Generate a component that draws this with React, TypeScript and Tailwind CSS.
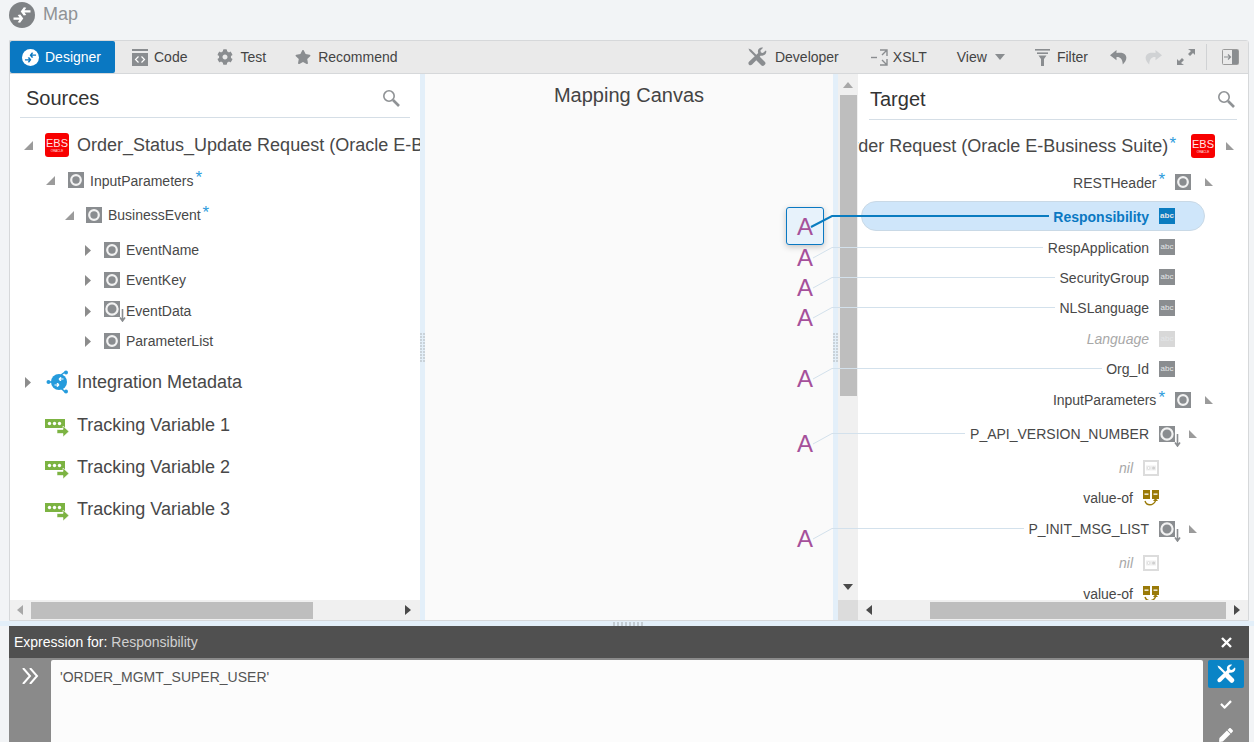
import React from "react"
import { FaCog, FaStar, FaCheck, FaPen } from "react-icons/fa"

function Expanded({ flip }: { flip?: boolean }) {
  return (
    <svg width={flip ? 8 : 9} height={flip ? 8 : 9} viewBox="0 0 9 9" className="shrink-0">
      <polygon points={flip ? "0,0 9,9 0,9" : "9,0 9,9 0,9"} fill="#9b9b9b" />
    </svg>
  )
}

function Collapsed() {
  return (
    <svg width="6" height="11" viewBox="0 0 6 11" className="shrink-0">
      <polygon points="0,0 6,5.5 0,11" fill="#8c8c8c" />
    </svg>
  )
}

function RingIcon() {
  return (
    <svg width="16" height="16" viewBox="0 0 16 16" className="shrink-0">
      <rect width="16" height="16" fill="#8a8d90" />
      <circle cx="8" cy="8" r="4.8" fill="#8a8d90" stroke="#f2f2f2" strokeWidth="2.2" />
    </svg>
  )
}

function RingDownIcon() {
  return (
    <svg width="22" height="21" viewBox="0 0 22 21" className="shrink-0">
      <rect width="16" height="16" fill="#8a8d90" />
      <circle cx="8" cy="8" r="5.6" fill="#8a8d90" stroke="#f2f2f2" strokeWidth="2.2" />
      <path d="M18.5 8V19M16 16.5l2.5 3.5 2.5-3.5" fill="none" stroke="#8a8d90" strokeWidth="1.6" />
    </svg>
  )
}

function AbcIcon({ tone = "bg-[#8a8d90]" }: { tone?: string }) {
  return (
    <span className={`${tone} flex h-[16px] w-[16px] shrink-0 items-center justify-center text-[8px] leading-none text-[#e4e6e8]`}>
      abc
    </span>
  )
}

function EbsIcon() {
  return (
    <span className="flex h-[24px] w-[24px] shrink-0 flex-col items-center justify-center rounded-[3px] bg-[#f80000] text-[#ffe6e6]">
      <span className="text-[11px] leading-[12px]">EBS</span>
      <span className="text-[3px] leading-[4px]">ORACLE</span>
    </span>
  )
}

function NilIcon() {
  return (
    <svg width="16" height="16" viewBox="0 0 16 16" className="shrink-0">
      <rect x="1" y="1" width="14" height="14" fill="#fff" stroke="#dcdcdc" strokeWidth="2" />
      <rect x="3" y="5.5" width="10" height="5" fill="#efefef" />
      <circle cx="5.6" cy="8" r="1.4" fill="#fff" stroke="#d4d4d4" strokeWidth="0.7" />
      <circle cx="10.6" cy="8" r="1.5" fill="#d0d0d0" />
    </svg>
  )
}

function ValueOfIcon() {
  return (
    <svg width="16" height="16" viewBox="0 0 16 16" className="shrink-0">
      <rect x="0" y="0" width="7" height="9" fill="#9a7a08" />
      <rect x="9" y="0" width="7" height="9" fill="#9a7a08" />
      <rect x="1.5" y="3.5" width="4" height="1.3" fill="#fff" />
      <rect x="10.5" y="3.5" width="4" height="1.3" fill="#fff" />
      <path d="M2 11c1.5 5 8 5 10.5 0" fill="none" stroke="#9a7a08" strokeWidth="1.4" />
      <polygon points="10,11 15,11 12.5,8" fill="#9a7a08" />
    </svg>
  )
}

function TrackingIcon() {
  return (
    <svg width="24" height="18" viewBox="0 0 24 18" className="translate-y-[3px]">
      <rect x="0" y="0" width="20" height="9" fill="#7cb342" />
      <circle cx="4.5" cy="4.5" r="1.7" fill="#fff" />
      <circle cx="9.5" cy="4.5" r="1.7" fill="#fff" />
      <circle cx="14.5" cy="4.5" r="1.7" fill="#fff" />
      <path d="M12 10.5h6V7l6 5.5-6 5.5v-3.5h-6z" fill="#7cb342" stroke="#fff" strokeWidth="0.6" />
    </svg>
  )
}

function MetadataIcon() {
  return (
    <svg width="23" height="24" viewBox="0 0 23 24" className="shrink-0">
      <path d="M3 12h6M15 5l4-3M15 18l4 4" stroke="#259bdc" strokeWidth="1.5" />
      <circle cx="2.5" cy="12" r="2" fill="#259bdc" />
      <circle cx="20" cy="2.5" r="2" fill="#259bdc" />
      <circle cx="20" cy="21.5" r="2" fill="#259bdc" />
      <circle cx="13" cy="12" r="8" fill="#259bdc" />
      <path d="M8.5 14.5h3l-1-1.4 1.6-.2 1.4 2-1.8 2-1.2-.3.5-1.1h-2.5zM17.5 9.5h-3l1 1.4-1.6.2-1.4-2 1.8-2 1.2.3-.5 1.1h2.5z" fill="#fff" />
    </svg>
  )
}

function MergeArrows({ size, circle, arrows }: { size: number; circle: string; arrows: string }) {
  return (
    <svg width={size} height={size} viewBox="0 0 26 26" className="shrink-0">
      <circle cx="13" cy="13" r="13" fill={circle} />
      <path d="M4.5 15.5h6l-1.8-2.6 2.6-.3 3 3.9-3.2 4.3-2.4-.5 1.8-2.6h-6zM21.5 10.5h-6l1.8 2.6-2.6.3-3-3.9 3.2-4.3 2.4.5-1.8 2.6h6z" fill={arrows} />
    </svg>
  )
}

function ToolsIcon({ size, color }: { size: number; color: string }) {
  return (
    <svg width={size} height={size} viewBox="0 0 20 20" className="shrink-0">
      {/* screwdriver */}
      <path d="M1.5 1.5l2.5 1 6 6-1.5 1.5-6-6z" fill={color} />
      <path d="M11.5 10l1-.5 5.500 5.500q1 1.500-.5 3t-3 .5l-5.500-5.500.5-1z" fill={color} />
      {/* wrench */}
      <path d="M18.800 3.400l-2.900 2.600-2-.5-.5-2 2.700-2.700c-2.400-.8-5 .8-5.200 3.300 0 .7.100 1.300.3 1.800l-9 8.700c-1.100 1.100-1 2.300-.2 3.100s2 .9 3.100-.2l8.800-9c2.800.8 5.800-1.300 5.400-4.500-.1-.3-.3-.6-.5-.6z" fill={color} />
    </svg>
  )
}

function UndoIcon({ color, flip }: { color: string; flip?: boolean }) {
  return (
    <svg width="17" height="15" viewBox="0 0 17 15" className={`shrink-0 ${flip ? "-scale-x-100" : ""}`}>
      <path d="M6.500 0L0 5.200l6.500 5V7c3.500-.3 6 1.600 6.300 7.500C15.800 11.500 17.500 8 15.500 5 13.800 2.700 10.500 2.500 6.500 3z" fill={color} />
    </svg>
  )
}

function CodeIcon() {
  return (
    <svg width="16" height="17" viewBox="0 0 16 17" className="shrink-0">
      <rect x="0" y="0" width="16" height="2" fill="#8a8d90" />
      <rect x="0" y="4" width="16" height="13" fill="#8a8d90" />
      <path d="M6.500 7.500l-3 3 3 3M9.500 7.500l3 3-3 3" fill="none" stroke="#fff" strokeWidth="1.2" />
    </svg>
  )
}

function XsltIcon() {
  return (
    <svg width="17" height="17" viewBox="0 0 17 17" className="shrink-0">
      <path d="M0 8.500h6" stroke="#8a8d90" strokeWidth="1.4" />
      <path d="M9 1h7v6M16 1l-5 5M9 16h7v-6M16 16l-5-5" fill="none" stroke="#8a8d90" strokeWidth="1.4" />
    </svg>
  )
}

function FilterIcon() {
  return (
    <svg width="15" height="17" viewBox="0 0 15 17" className="shrink-0">
      <rect x="0" y="0" width="15" height="1.6" fill="#8a8d90" />
      <rect x="2" y="3.400" width="11" height="1.6" fill="#8a8d90" />
      <path d="M3.500 6.600h8L9 10v7H6v-7z" fill="#8a8d90" />
    </svg>
  )
}

function ExpandIcon() {
  return (
    <svg width="18" height="16" viewBox="0 0 18 16" className="shrink-0">
      <path d="M11 0h7v6l-2-2-3 3-2-2 3-3zM7 16H0v-6l2 2 3-3 2 2-3 3z" fill="#8a8d90" />
    </svg>
  )
}

function PanelIcon() {
  return (
    <svg width="17" height="16" viewBox="0 0 17 16" className="shrink-0">
      <rect x="0.500" y="0.500" width="16" height="15" rx="1" fill="none" stroke="#9a9a9a" />
      <rect x="10" y="1" width="6" height="14" fill="#8a8d90" />
      <path d="M2 8h6M6 5.500L8.500 8 6 10.500" fill="none" stroke="#8a8d90" strokeWidth="1.2" />
    </svg>
  )
}

function SearchIcon() {
  return (
    <svg width="18" height="18" viewBox="0 0 18 18" className="shrink-0">
      <circle cx="7" cy="7" r="5.200" fill="none" stroke="#8f9295" strokeWidth="1.6" />
      <path d="M11 11l6 6" stroke="#8f9295" strokeWidth="2.600" />
    </svg>
  )
}

function Grip() {
  return (
    <span className="grid grid-cols-2 gap-[1px]">
      {Array.from({ length: 20 }).map((_, i) => (
        <span key={i} className="h-[2px] w-[2px] bg-[#c9d2d9]" />
      ))}
    </span>
  )
}

function SourceRow({ className, tri, icon, text, star, textClass = "text-[14px]" }: {
  className: string
  tri?: React.ReactNode
  icon: React.ReactNode
  text: string
  star?: boolean
  textClass?: string
}) {
  return (
    <div className={`${className} flex h-[30px] items-center whitespace-nowrap text-[#484848] [&>*]:shrink-0`}>
      {tri}
      {icon}
      <span className={textClass}>{text}</span>
      {star && <span className="ml-[2px] -translate-y-[3px] text-[17px] leading-none text-[#2d9bdc]">*</span>}
    </div>
  )
}

function TargetRow({ className, text, textClass = "text-[#484848]", icon, tri }: {
  className: string
  text: string
  textClass?: string
  icon: React.ReactNode
  tri?: React.ReactNode
}) {
  return (
    <div className={`${className} flex h-[30px] items-center justify-end whitespace-nowrap text-[14px]`}>
      <span className={textClass}>{text}</span>
      {icon}
      {tri}
    </div>
  )
}

const star = <span className="ml-[2px] mr-[10px] -translate-y-[3px] text-[17px] leading-none text-[#2d9bdc]">*</span>
const nodes = [
  { top: "top-[167px]" },
  { top: "top-[197px]" },
  { top: "top-[227px]" },
  { top: "top-[288px]" },
  { top: "top-[353px]" },
  { top: "top-[448px]" },
]
const links = [
  { y: 247, tx: 1043, ay: 258 },
  { y: 277, tx: 1055, ay: 288 },
  { y: 307, tx: 1055, ay: 318 },
  { y: 368, tx: 1102, ay: 379 },
  { y: 433, tx: 965, ay: 444 },
  { y: 528, tx: 1024, ay: 539 },
]

export default function App() {
  return (
    <div className="relative h-[742px] w-[1254px] overflow-hidden bg-[#f2f4f6] font-['Liberation_Sans',Arial,sans-serif]">
      <div className="flex h-[28px] items-center gap-[8px] pl-[9px] pt-[1px]">
        <MergeArrows size={26} circle="#7f8285" arrows="#fff" />
        <span className="text-[18px] text-[#8f9295]">Map</span>
      </div>

      <div className="ml-[9px] mt-[12px] h-[581px] w-[1240px] rounded-tr-[3px] border border-[#d6d8da] bg-white">
        {/* toolbar */}
        <div className="flex h-[33px] items-center border-b border-[#d6d8da] bg-[#eaeaea] pr-[9px] text-[14px] text-[#444]">
          <div className="flex h-[32px] w-[105px] items-center gap-[6px] rounded-[2px] bg-[#0a78c2] pl-[12px] text-white">
            <MergeArrows size={17} circle="#fff" arrows="#0a78c2" />
            Designer
          </div>
          <div className="ml-[17px] flex items-center gap-[6px]"><CodeIcon />Code</div>
          <div className="ml-[30px] flex items-center gap-[7px]"><FaCog className="h-[16px] w-[16px] text-[#8a8d90]" />Test</div>
          <div className="ml-[29px] flex items-center gap-[7px]"><FaStar className="h-[16px] w-[16px] text-[#8a8d90]" />Recommend</div>
          <div className="ml-auto flex items-center gap-[8px]"><ToolsIcon size={20} color="#8a8d90" />Developer</div>
          <div className="ml-[32px] flex items-center gap-[5px]"><XsltIcon />XSLT</div>
          <div className="ml-[30px] flex items-center gap-[8px]">
            View
            <svg width="10" height="6" viewBox="0 0 10 6"><polygon points="0,0 10,0 5,6" fill="#8a8d90" /></svg>
          </div>
          <div className="ml-[30px] flex items-center gap-[7px]"><FilterIcon />Filter</div>
          <span className="ml-[22px]"><UndoIcon color="#8a8d90" /></span>
          <span className="ml-[18px]"><UndoIcon color="#d0d2d4" flip /></span>
          <div className="ml-[15px]"><ExpandIcon /></div>
          <div className="ml-[11px] h-[26px] w-px bg-[#d0d2d4]" />
          <div className="ml-[15px]"><PanelIcon /></div>
        </div>

        <div className="flex h-[546px]">
          {/* sources */}
          <div className="flex w-[410px] flex-col">
            <div className="mx-[10px] flex h-[44px] items-center justify-between border-b border-[#d5dee6] pl-[6px] pr-[10px] pt-[4px]">
              <span className="text-[20px] text-[#333]">Sources</span>
              <SearchIcon />
            </div>
            <div className="flex-1 overflow-hidden">
              <SourceRow className="mt-[12px] pl-[14px]" tri={<span className="w-[21px]"><Expanded /></span>} icon={<span className="mr-[8px]"><EbsIcon /></span>} text="Order_Status_Update Request (Oracle E-Business Suite)" textClass="text-[18px]" star />
              <SourceRow className="mt-[5px] pl-[36px]" tri={<span className="w-[22px]"><Expanded /></span>} icon={<span className="mr-[6px]"><RingIcon /></span>} text="InputParameters" textClass="translate-y-[1px] text-[14px]" star />
              <SourceRow className="mt-[5px] pl-[55px]" tri={<span className="w-[21px]"><Expanded /></span>} icon={<span className="mr-[6px]"><RingIcon /></span>} text="BusinessEvent" star />
              <SourceRow className="mt-[5px] pl-[75px]" tri={<span className="w-[19px]"><Collapsed /></span>} icon={<span className="mr-[6px]"><RingIcon /></span>} text="EventName" />
              <SourceRow className="mt-0 pl-[75px]" tri={<span className="w-[19px]"><Collapsed /></span>} icon={<span className="mr-[6px]"><RingIcon /></span>} text="EventKey" />
              <SourceRow className="mt-[1px] pl-[75px]" tri={<span className="w-[19px]"><Collapsed /></span>} icon={<span className="w-[22px]"><RingDownIcon /></span>} text="EventData" />
              <SourceRow className="mt-0 pl-[75px]" tri={<span className="w-[19px]"><Collapsed /></span>} icon={<span className="mr-[6px]"><RingIcon /></span>} text="ParameterList" />
              <SourceRow className="mt-[11px] pl-[15px]" tri={<span className="w-[21px]"><Collapsed /></span>} icon={<span className="mr-[8px]"><MetadataIcon /></span>} text="Integration Metadata" textClass="text-[18px]" />
              <SourceRow className="mt-[13px] pl-[35px]" icon={<span className="mr-[8px]"><TrackingIcon /></span>} text="Tracking Variable 1" textClass="text-[18px]" />
              <SourceRow className="mt-[12px] pl-[35px]" icon={<span className="mr-[8px]"><TrackingIcon /></span>} text="Tracking Variable 2" textClass="text-[18px]" />
              <SourceRow className="mt-[12px] pl-[35px]" icon={<span className="mr-[8px]"><TrackingIcon /></span>} text="Tracking Variable 3" textClass="text-[18px]" />
            </div>
            <div className="flex h-[20px] items-center bg-[#f0f0f0]">
              <svg width="6" height="10" viewBox="0 0 6 10" className="ml-[7px]"><polygon points="6,0 0,5 6,10" fill="#a8a8a8" /></svg>
              <div className="ml-[8px] h-[17px] w-[282px] bg-[#bebebe]" />
              <svg width="6" height="10" viewBox="0 0 6 10" className="ml-[92px]"><polygon points="0,0 6,5 0,10" fill="#4a4a4a" /></svg>
            </div>
          </div>

          <div className="flex w-[5px] items-center justify-center bg-[#e3eff9]"><Grip /></div>

          {/* canvas */}
          <div className="relative w-[408px] bg-[#fafafa]">
            <div className="pt-[6px] text-center text-[20px] text-[#444]">Mapping Canvas</div>
            <div className="absolute left-[361px] top-[133px] flex h-[38px] w-[38px] items-center justify-center rounded-[3px] border border-[#0a78c2] bg-[#e7f2fb] pt-[1px] text-[24px] text-[#a5509a] shadow-[0_2px_6px_rgba(0,0,0,0.22)]">A</div>
            {nodes.map((n, i) => (
              <div key={i} className={`absolute left-[372px] ${n.top} text-[24px] leading-[34px] text-[#a5509a]`}>A</div>
            ))}
          </div>

          <div className="flex w-[5px] items-center justify-center bg-[#e3eff9]"><Grip /></div>

          {/* canvas scrollbar */}
          <div className="flex w-[20px] flex-col items-center bg-[#f0f0f0]">
            <svg width="10" height="6" viewBox="0 0 10 6" className="mt-[8px]"><polygon points="5,0 10,6 0,6" fill="#a8a8a8" /></svg>
            <div className="mt-[7px] h-[301px] w-[17px] bg-[#bebebe]" />
            <svg width="10" height="6" viewBox="0 0 10 6" className="mt-[188px]"><polygon points="0,0 10,0 5,6" fill="#4a4a4a" /></svg>
            <div className="mt-[10px] h-[20px] w-full bg-[#dcdcdc]" />
          </div>

          {/* target */}
          <div className="flex w-[390px] flex-col">
            <div className="mx-[11px] flex h-[46px] items-center justify-between border-b border-[#d5dee6] pl-[1px] pr-[2px] pt-[4px]">
              <span className="text-[20px] text-[#333]">Target</span>
              <SearchIcon />
            </div>
            <div className="flex-1 overflow-hidden">
              <div className="mt-[11px] flex h-[30px] items-center justify-end whitespace-nowrap pr-[14px] text-[18px] text-[#484848]">
                <span className="shrink-0">Order Request (Oracle E-Business Suite)</span>
                <span className="ml-[1px] mr-[15px] shrink-0 -translate-y-[3px] text-[17px] leading-none text-[#2d9bdc]">*</span>
                <EbsIcon />
                <span className="ml-[11px] shrink-0"><Expanded flip /></span>
              </div>
              <TargetRow className="mt-[6px] pr-[35px]" text="RESTHeader" textClass="translate-y-[1px] text-[#484848]" icon={<>{star}<RingIcon /></>} tri={<span className="ml-[14px]"><Expanded flip /></span>} />
              <div className="ml-[3px] mr-[43px] mt-[4px] flex h-[30px] items-center justify-end rounded-full border border-[#c9d9e6] bg-[#cfe6fa] pr-[29px] text-[14px] font-bold text-[#0a78c2]">
                <span className="translate-y-[1px]">Responsibility</span>
                <span className="ml-[10px]"><AbcIcon tone="bg-[#0a7cc0]" /></span>
              </div>
              <TargetRow className="mt-[1px] pr-[73px]" text="RespApplication" textClass="translate-y-[1px] text-[#484848]" icon={<span className="ml-[10px]"><AbcIcon /></span>} />
              <TargetRow className="pr-[73px]" text="SecurityGroup" textClass="translate-y-[1px] text-[#484848]" icon={<span className="ml-[10px]"><AbcIcon /></span>} />
              <TargetRow className="mt-[1px] pr-[73px]" text="NLSLanguage" icon={<span className="ml-[10px]"><AbcIcon /></span>} />
              <TargetRow className="mt-[1px] pr-[73px]" text="Language" textClass="italic text-[#a8a8a8]" icon={<span className="ml-[10px]"><AbcIcon tone="bg-[#d8d8d8]" /></span>} />
              <TargetRow className="pr-[73px]" text="Org_Id" icon={<span className="ml-[10px]"><AbcIcon /></span>} />
              <TargetRow className="mt-[1px] pr-[35px]" text="InputParameters" icon={<>{star}<RingIcon /></>} tri={<span className="ml-[14px]"><Expanded flip /></span>} />
              <TargetRow className="mt-[4px] pr-[51px]" text="P_API_VERSION_NUMBER" icon={<span className="ml-[10px] mt-[5px]"><RingDownIcon /></span>} tri={<span className="ml-[8px]"><Expanded flip /></span>} />
              <TargetRow className="mt-[4px] pr-[89px]" text="nil" textClass="italic text-[#a8a8a8]" icon={<span className="ml-[10px]"><NilIcon /></span>} />
              <TargetRow className="pr-[89px]" text="value-of" icon={<span className="ml-[10px]"><ValueOfIcon /></span>} />
              <TargetRow className="mt-[1px] pr-[51px]" text="P_INIT_MSG_LIST" icon={<span className="ml-[10px] mt-[5px]"><RingDownIcon /></span>} tri={<span className="ml-[8px]"><Expanded flip /></span>} />
              <TargetRow className="mt-[4px] pr-[89px]" text="nil" textClass="italic text-[#a8a8a8]" icon={<span className="ml-[10px]"><NilIcon /></span>} />
              <TargetRow className="mt-[1px] pr-[89px]" text="value-of" icon={<span className="ml-[10px]"><ValueOfIcon /></span>} />
            </div>
            <div className="flex h-[20px] items-center bg-[#f0f0f0]">
              <svg width="6" height="10" viewBox="0 0 6 10" className="ml-[8px]"><polygon points="6,0 0,5 6,10" fill="#4a4a4a" /></svg>
              <div className="ml-[58px] h-[17px] w-[296px] bg-[#bebebe]" />
              <svg width="6" height="10" viewBox="0 0 6 10" className="ml-[8px]"><polygon points="0,0 6,5 0,10" fill="#4a4a4a" /></svg>
            </div>
          </div>
        </div>
      </div>

      {/* splitter */}
      <div className="flex h-[5px] items-center justify-center bg-[#e3eff9] pr-[2px] pl-[6px]">
        <span className="h-[4px] w-[32px] bg-[repeating-linear-gradient(90deg,#c3ccd3_0_2px,transparent_2px_4px)]" />
      </div>

      {/* expression editor */}
      <div className="ml-[9px] w-[1240px]">
        <div className="flex h-[32px] items-center justify-between bg-[#505050] pl-[5px] pr-[17px] text-[14px] text-white">
          <span>Expression for: <span className="text-[#d0d0d0]">Responsibility</span></span>
          <svg width="11" height="11" viewBox="0 0 11 11"><path d="M1 1l9 9M10 1l-9 9" stroke="#fff" strokeWidth="2.400" /></svg>
        </div>
        <div className="flex h-[84px] bg-[#8a8a8a] pt-[2px]">
          <div className="flex w-[42px] justify-center pt-[8px]">
            <svg width="17" height="16" viewBox="0 0 17 16"><path d="M1 0l7 8-7 8M8 0l7 8-7 8" fill="none" stroke="#fff" strokeWidth="2" /></svg>
          </div>
          <div className="h-full w-[1152px] rounded-t-[2px] bg-[#fcfcfc] pl-[9px] pt-[9px] text-[14px] leading-[16px] text-[#555]">
            'ORDER_MGMT_SUPER_USER'
          </div>
          <div className="flex flex-1 flex-col items-center">
            <div className="flex h-[32px] w-[36px] items-center justify-center rounded-[2px] bg-[#0a84c6]">
              <ToolsIcon size={20} color="#fff" />
            </div>
            <FaCheck className="mt-[11px] h-[13px] w-[14px] text-white" />
            <FaPen className="mt-[18px] h-[16px] w-[16px] text-white" />
          </div>
        </div>
      </div>

      {/* links between canvas and target */}
      <svg width="1254" height="742" viewBox="0 0 1254 742" className="pointer-events-none absolute left-0 top-0">
        {links.map((l) => (
          <path key={l.y} d={`M813 ${l.ay}L832 ${l.y + 0.5}H${l.tx}`} fill="none" stroke="#d3e1ec" strokeWidth="1" />
        ))}
        <path d="M811 227L832 216H1049" fill="none" stroke="#0a7cc0" strokeWidth="2" />
      </svg>
    </div>
  )
}
